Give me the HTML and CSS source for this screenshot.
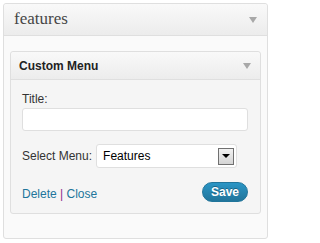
FILE: index.html
```html
<!DOCTYPE html>
<html>
<head>
<meta charset="utf-8">
<link rel="stylesheet" href="styles.css">
</head>
<body>
<div class="widget">
  <div class="widget-head">
    <span class="widget-title">features</span>
    <span class="arrow"></span>
  </div>
  <div class="widget-body">
    <div class="inner">
      <div class="inner-head">
        <span class="inner-title">Custom Menu</span>
        <span class="arrow"></span>
      </div>
      <div class="inner-body">
        <label class="lbl">Title:</label>
        <div class="input"></div>
        <div class="select-row">
          <span class="lbl-inline">Select Menu:</span>
          <div class="select">
            <span class="select-text">Features</span>
            <span class="select-btn"><span class="select-tri"></span></span>
          </div>
        </div>
        <div class="actions">
          <div class="links"><a class="link">Delete</a> <span class="sep">|</span> <a class="link">Close</a></div>
          <button class="save">Save</button>
        </div>
      </div>
    </div>
  </div>
</div>
</body>
</html>
```
FILE: styles.css
```css
html, body { margin: 0; padding: 0; background: #fff; }
body { padding: 3px; font-family: "Liberation Sans", Arial, sans-serif; font-size: 12px; color: #333; }

.widget {
  width: 265px; height: 236px; box-sizing: border-box;
  border: 1px solid #dfdfdf; border-radius: 3px;
  background: #fafafa;
}
.widget-head {
  height: 32px; box-sizing: border-box;
  border-bottom: 1px solid #dfdfdf;
  background: linear-gradient(to bottom, #f9f9f9, #ececec);
  display: flex; align-items: center; justify-content: space-between;
  padding: 0 10px 0 10px;
  border-radius: 3px 3px 0 0;
}
.widget-title {
  font-family: "Liberation Serif", "Times New Roman", serif;
  font-size: 17px; color: #464646; line-height: 20px; margin-top: -2px;
}
.arrow {
  width: 0; height: 0;
  border-left: 4px solid transparent; border-right: 4px solid transparent;
  border-top: 6px solid #a8a8a8;
}
.widget-body { padding: 15px 6px 0 6px; }

.inner {
  border: 1px solid #dfdfdf; border-radius: 3px;
  background: #f5f5f5;
}
.inner-head {
  height: 28px; box-sizing: border-box;
  border-bottom: 1px solid #dfdfdf;
  background: linear-gradient(to bottom, #f9f9f9, #ececec);
  display: flex; align-items: center; justify-content: space-between;
  padding: 0 9px 0 8px;
  border-radius: 3px 3px 0 0;
}
.inner-title { font-weight: bold; font-size: 12px; color: #222; }
.inner-body { padding: 11px 12px 11px 11px; }

.lbl { display: block; line-height: 16px; margin-bottom: 1px; }
.input {
  height: 23px; box-sizing: border-box;
  border: 1px solid #dfdfdf; border-radius: 3px; background: #fff;
}
.select-row { display: flex; align-items: center; margin-top: 13px; gap: 4px; }
.lbl-inline { line-height: 16px; }
.select {
  width: 141px; height: 24px; box-sizing: border-box;
  border: 1px solid #dfdfdf; border-radius: 3px; background: #fff;
  display: flex; align-items: center; justify-content: space-between;
  padding: 0 2px 0 6px;
}
.select-text { color: #000; line-height: 16px; }
.select-btn {
  width: 16px; height: 17px; box-sizing: border-box;
  border: 1px solid #707070;
  background: linear-gradient(to bottom, #f2f2f2, #d4d4d4);
  display: flex; align-items: center; justify-content: center;
}
.select-tri {
  width: 0; height: 0;
  border-left: 4px solid transparent; border-right: 4px solid transparent;
  border-top: 4px solid #000;
}
.actions { display: flex; justify-content: space-between; align-items: flex-end; margin-top: 14px; }
.links { line-height: 16px; }
.link { color: #21759b; text-decoration: none; }
.sep { color: #8b2d8b; }
.save {
  width: 46px; height: 20px; box-sizing: border-box;
  border: 1px solid #21759b; border-radius: 11px;
  background: linear-gradient(to bottom, #2a95c5, #21759b);
  color: #fff; font-family: "Liberation Sans", Arial, sans-serif;
  font-weight: bold; font-size: 12px; padding: 0; line-height: 18px;
  text-shadow: 0 -1px 0 rgba(0,0,0,0.3);
}
```
